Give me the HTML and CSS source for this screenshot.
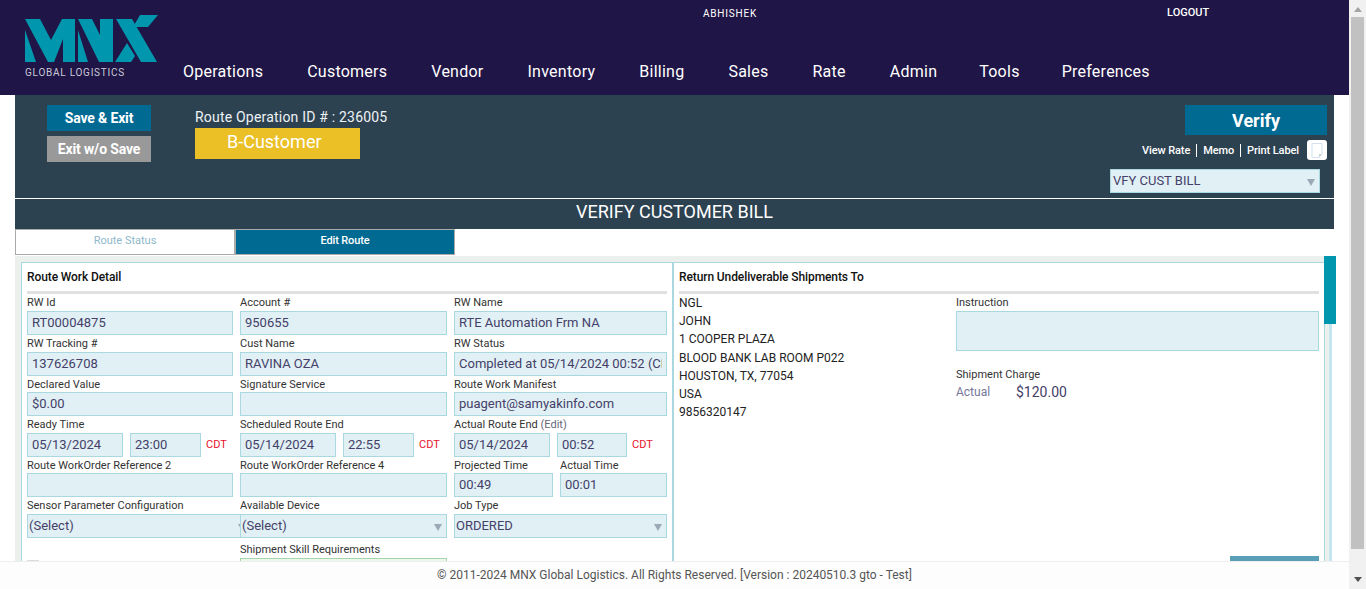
FILE: index.html
```html
<!DOCTYPE html>
<html>
  <head>
    <title>Verify Customer Bill</title>
    <meta name="viewport" content="width=device-width, initial-scale=1.0">
    <link rel="stylesheet" href="styles.css">
  </head>
  <body>
    <div class="page">
      <div class="main">
        <header class="topbar">
          <div class="logo">
            <svg class="logo-mark" width="134" height="47" viewBox="0 0 134 47">
              <polygon fill="#0097ae" points="0,15 11,47 0,47"/>
              <polygon fill="#0097ae" points="0,4 15,4 26,25 37,4 50,4 50,47 38,47 38,24 29,47 23,47"/>
              <polygon fill="#0097ae" points="53,15 63,47 53,47"/>
              <polygon fill="#0097ae" points="53,4 67,4 75,20 75,4 88,4 88,47 74,47"/>
              <polygon fill="#0097ae" points="91,4 107,4 132,47 116,47"/>
              <polygon fill="#0097ae" points="102,28 110,41 106,47 90,47"/>
              <polygon fill="#0097ae" points="115,0 133,0 123,12 108,12"/>
            </svg>
            <div class="logo-text">GLOBAL LOGISTICS</div>
          </div>
          <div class="topbar-right">
            <div class="userbar">
              <span class="username">ABHISHEK</span>
              <a class="logout">LOGOUT</a>
            </div>
            <nav class="nav">
              <a>Operations</a>
              <a>Customers</a>
              <a>Vendor</a>
              <a>Inventory</a>
              <a>Billing</a>
              <a>Sales</a>
              <a>Rate</a>
              <a>Admin</a>
              <a>Tools</a>
              <a>Preferences</a>
            </nav>
          </div>
        </header>

        <section class="route-head">
          <div class="route-actions">
            <div class="actions-left">
              <button class="btn btn-blue">Save &amp; Exit</button>
              <button class="btn btn-grey">Exit w/o Save</button>
            </div>
            <div class="route-id">
              <div class="route-id-text">Route Operation ID # : 236005</div>
              <div class="route-badge">B-Customer</div>
            </div>
            <div class="actions-right">
              <button class="btn-verify">Verify</button>
              <div class="links">
                <a>View Rate</a>
                <a>Memo</a>
                <a>Print Label</a>
                <span class="note-icon">
                  <svg width="12" height="15" viewBox="0 0 12 15">
                    <path d="M1 .5h10v10.500l-3 3.500H1z" fill="#fff" stroke="#d3e2ee"/>
                    <path d="M8 14.500v-3.500h3z" fill="#c9d3da"/>
                  </svg>
                </span>
              </div>
              <div class="status-select">VFY CUST BILL</div>
            </div>
          </div>
          <h1 class="route-title">VERIFY CUSTOMER BILL</h1>
        </section>

        <div class="tabs">
          <a class="tab">Route Status</a>
          <a class="tab tab-active">Edit Route</a>
        </div>

        <div class="work-wrap">
          <div class="work">
            <div class="panel">
              <div class="panel-left">
                <h2 class="panel-title">Route Work Detail</h2>
                <div class="form-grid">
                  <div class="cell">
                    <label>RW Id</label>
                    <div class="field">RT00004875</div>
                  </div>
                  <div class="cell">
                    <label>Account #</label>
                    <div class="field">950655</div>
                  </div>
                  <div class="cell">
                    <label>RW Name</label>
                    <div class="field">RTE Automation Frm NA</div>
                  </div>

                  <div class="cell">
                    <label>RW Tracking #</label>
                    <div class="field">137626708</div>
                  </div>
                  <div class="cell">
                    <label>Cust Name</label>
                    <div class="field">RAVINA OZA</div>
                  </div>
                  <div class="cell">
                    <label>RW Status</label>
                    <div class="field">Completed at 05/14/2024 00:52 (CDT)</div>
                  </div>

                  <div class="cell">
                    <label>Declared Value</label>
                    <div class="field">$0.00</div>
                  </div>
                  <div class="cell">
                    <label>Signature Service</label>
                    <div class="field"></div>
                  </div>
                  <div class="cell">
                    <label>Route Work Manifest</label>
                    <div class="field">puagent@samyakinfo.com</div>
                  </div>

                  <div class="cell">
                    <label>Ready Time</label>
                    <div class="date-row">
                      <div class="field date">05/13/2024</div>
                      <div class="field time">23:00</div>
                      <span class="tz">CDT</span>
                    </div>
                  </div>
                  <div class="cell">
                    <label>Scheduled Route End</label>
                    <div class="date-row">
                      <div class="field date">05/14/2024</div>
                      <div class="field time">22:55</div>
                      <span class="tz">CDT</span>
                    </div>
                  </div>
                  <div class="cell">
                    <label>Actual Route End <span class="edit">(Edit)</span></label>
                    <div class="date-row">
                      <div class="field date">05/14/2024</div>
                      <div class="field time time-short">00:52</div>
                      <span class="tz">CDT</span>
                    </div>
                  </div>

                  <div class="cell">
                    <label>Route WorkOrder Reference 2</label>
                    <div class="field"></div>
                  </div>
                  <div class="cell">
                    <label>Route WorkOrder Reference 4</label>
                    <div class="field"></div>
                  </div>
                  <div class="cell split">
                    <div class="split-projected">
                      <label>Projected Time</label>
                      <div class="field">00:49</div>
                    </div>
                    <div class="split-actual">
                      <label>Actual Time</label>
                      <div class="field">00:01</div>
                    </div>
                  </div>

                  <div class="cell">
                    <label>Sensor Parameter Configuration</label>
                    <div class="field select select-wide">(Select)</div>
                  </div>
                  <div class="cell cell-over">
                    <label>Available Device</label>
                    <div class="field select">(Select)</div>
                  </div>
                  <div class="cell">
                    <label>Job Type</label>
                    <div class="field select">ORDERED</div>
                  </div>

                  <div class="cell cell-last">
                    <span class="check"></span>
                  </div>
                  <div class="cell cell-last">
                    <label>Shipment Skill Requirements</label>
                    <div class="field field-green"></div>
                  </div>
                </div>
              </div>

              <div class="panel-right">
                <h2 class="panel-title">Return Undeliverable Shipments To</h2>
                <div class="return-cols">
                  <div class="address">
                    <div>NGL</div>
                    <div>JOHN</div>
                    <div>1 COOPER PLAZA</div>
                    <div>BLOOD BANK LAB ROOM P022</div>
                    <div>HOUSTON, TX, 77054</div>
                    <div>USA</div>
                    <div>9856320147</div>
                  </div>
                  <div class="return-side">
                    <label>Instruction</label>
                    <div class="field textarea"></div>
                    <label class="charge-label">Shipment Charge</label>
                    <div class="charge-row">
                      <span class="charge-type">Actual</span>
                      <span class="charge-value">$120.00</span>
                    </div>
                    <div class="save-btn"></div>
                  </div>
                </div>
              </div>
            </div>
          </div>
          <div class="track"></div>
          <div class="track-thumb"></div>
        </div>
      </div>
      <footer class="footer">© 2011-2024 MNX Global Logistics. All Rights Reserved. [Version : 20240510.3 gto - Test]</footer>
    </div>

    <div class="scrollbar">
      <span class="arrow-up"></span>
      <div class="scroll-thumb"></div>
      <span class="arrow-down"></span>
    </div>
  </body>
</html>
```

FILE: styles.css
```css
html, body {
  margin: 0;
  height: 100%;
  overflow: hidden;
}
body {
  display: flex;
  background-color: #fff;
  font-family: Roboto, "Liberation Sans", sans-serif;
  color: #333;
}
.page {
  width: 1349px;
  height: 589px;
  display: flex;
  flex-direction: column;
}
.main {
  flex: 1;
  overflow: hidden;
}

/* top bar */
.topbar {
  height: 95px;
  display: flex;
  background-color: #1f1546;
  color: #fff;
}
.logo {
  width: 158px;
  margin-left: 25px;
  flex: none;
  padding-top: 15px;
}
.logo-mark {
  display: block;
}
.logo-text {
  margin-top: 5px;
  font-size: 10px;
  line-height: 12px;
  letter-spacing: .75px;
  color: #c9c9d6;
}
.topbar-right {
  flex: 1;
}
.userbar {
  height: 61px;
  display: flex;
  padding-top: 6px;
  box-sizing: border-box;
  font-size: 10px;
  line-height: 14px;
}
.username {
  margin: 1px 0 0 520px;
  letter-spacing: .8px;
}
.logout {
  margin-left: 410px;
  font-size: 11px;
  font-weight: 500;
}
.nav {
  display: flex;
  gap: 44px;
  font-size: 16px;
  line-height: 22px;
  letter-spacing: .25px;
}
.nav a:nth-child(n+9) {
  margin-left: -2px;
}

/* route header */
.route-head {
  margin-left: 15px;
  width: 1319px;
  background-color: #2d4251;
  color: #fff;
}
.route-actions {
  height: 103px;
  display: flex;
  border-bottom: 1px solid #fff;
}
.actions-left {
  margin-left: 32px;
  padding-top: 10px;
  width: 148px;
  flex: none;
}
.btn {
  display: block;
  width: 104px;
  height: 26px;
  margin-bottom: 5px;
  padding: 0;
  border: none;
  color: #fff;
  font-family: inherit;
  font-size: 14px;
  font-weight: 700;
  letter-spacing: -.15px;
}
.btn-blue {
  background-color: #006a93;
}
.btn-grey {
  background-color: #999;
}
.route-id {
  padding-top: 14px;
  flex: 1;
}
.route-id-text {
  font-size: 14px;
  line-height: 17px;
  letter-spacing: .2px;
  color: #eef3f6;
}
.route-badge {
  width: 133px;
  height: 31px;
  padding-left: 32px;
  margin-top: 2px;
  background-color: #ebbf26;
  font-size: 18px;
  line-height: 28px;
}
.actions-right {
  width: 217px;
  flex: none;
  padding: 10px 7px 0 0;
  display: flex;
  flex-direction: column;
  align-items: flex-end;
}
.btn-verify {
  width: 142px;
  height: 30px;
  padding: 0;
  border: none;
  background-color: #006a93;
  color: #fff;
  font-family: inherit;
  font-size: 18px;
  font-weight: 700;
}
.links {
  display: flex;
  align-items: center;
  height: 20px;
  margin-top: 5px;
  font-size: 11px;
  font-weight: 500;
  letter-spacing: -.1px;
}
.links a {
  padding: 0 6px;
  line-height: 13px;
  border-left: 1px solid #fff;
}
.links a:first-child {
  border-left: none;
}
.note-icon {
  width: 20px;
  height: 20px;
  margin-left: 2px;
  background-color: #fff;
  border-radius: 3px;
  display: flex;
  align-items: center;
  justify-content: center;
}
.status-select {
  position: relative;
  width: 206px;
  height: 22px;
  margin: 9px 7px 0 0;
  padding-left: 2px;
  background-color: #e0f0f4;
  border: 1px solid #aad8e0;
  font-size: 13px;
  line-height: 22px;
  color: #45406a;
}
.status-select::after, .select::after {
  content: "";
  position: absolute;
  right: 4px;
  top: 9px;
  border-left: 4px solid transparent;
  border-right: 4px solid transparent;
  border-top: 7px solid #9aa9b8;
}
.route-title {
  margin: 0;
  height: 30px;
  font-size: 18px;
  font-weight: 400;
  line-height: 26px;
  text-align: center;
}

/* tabs */
.tabs {
  display: flex;
  margin-left: 15px;
  height: 26px;
}
.tab {
  width: 220px;
  box-sizing: border-box;
  border: 1px solid #aaa;
  background-color: #fff;
  text-align: center;
  font-size: 11px;
  line-height: 22px;
  color: #8fb8cc;
}
.tab-active {
  background-color: #006a93;
  color: #fff;
  font-weight: 500;
  letter-spacing: -.15px;
}

/* work area */
.work-wrap {
  position: relative;
  display: flex;
  margin: 1px 0 0 15px;
}
.work {
  width: 1314px;
  box-sizing: border-box;
  padding: 6px 4px 0 6px;
  background-color: #ecf0ed;
}
.track {
  width: 3px;
  background-color: #c5e6f0;
}
.track-thumb {
  position: absolute;
  left: 1309px;
  top: 0;
  width: 12px;
  height: 68px;
  background-color: #0097ae;
}
.panel {
  display: flex;
  background-color: #fff;
  border: 1px solid #aad8e0;
  border-bottom: none;
  height: 400px;
}
.panel-left {
  width: 640px;
  padding: 0 5px;
  border-right: 2px solid #aad8e0;
  flex: none;
}
.panel-right {
  width: 640px;
  padding: 0 5px;
  flex: none;
}
.panel-title {
  margin: 0;
  height: 28px;
  border-bottom: 3px solid #e0e0e0;
  font-size: 12px;
  font-weight: 500;
  line-height: 29px;
  letter-spacing: -.1px;
  color: #111;
}
.form-grid {
  display: grid;
  grid-template-columns: 206px 207px 213px;
  column-gap: 7px;
  padding-top: .4px;
}
.cell {
  min-width: 0;
}
.cell-over {
  position: relative;
}
.cell-last {
  padding-top: 3.4px;
}
label {
  display: block;
  height: 16.6px;
  font-size: 11px;
  line-height: 17px;
  color: #333;
  white-space: nowrap;
}
.edit {
  color: #667;
}
.field {
  position: relative;
  height: 24px;
  box-sizing: border-box;
  padding: 0 4px;
  background-color: #e0f0f4;
  border: 1px solid #aad8e0;
  font-size: 13px;
  line-height: 22px;
  color: #45406a;
  white-space: nowrap;
  overflow: clip;
  overflow-clip-margin: content-box;
}
.date-row {
  display: flex;
  align-items: center;
  gap: 7px;
}
.date {
  width: 96px;
}
.time {
  width: 71px;
}
.time-short {
  width: 70px;
}
.tz {
  margin-left: -2px;
  font-size: 11px;
  color: #e8112d;
}
.split {
  display: flex;
  gap: 7px;
}
.split-projected {
  width: 99px;
}
.split-actual {
  flex: 1;
}
.select {
  padding: 0 1px;
  overflow: hidden;
}
.select-wide {
  width: 214px;
}
.select-wide::after {
  right: -6px;
}
.field-green {
  border-color: #a5d6a7;
  background-color: #eef7ee;
}
.check {
  display: block;
  width: 12px;
  height: 12px;
  margin-top: 18.6px;
  background-color: #dcdcdc;
}

/* return address */
.return-cols {
  display: flex;
}
.address {
  width: 277px;
  flex: none;
  font-size: 12px;
  line-height: 18.2px;
  color: #222;
}
.return-side {
  flex: 1;
  padding-top: .4px;
}
.textarea {
  height: 40px;
}
.charge-label {
  margin-top: 15px;
}
.charge-row {
  display: flex;
  align-items: center;
  height: 18px;
}
.charge-type {
  width: 60px;
  font-size: 12px;
  color: #77779a;
}
.charge-value {
  font-size: 14px;
  color: #45406a;
}
.save-btn {
  width: 89px;
  height: 28px;
  margin: 155px 0 0 auto;
  background-color: #5a9fb8;
}

/* footer */
.footer {
  height: 28px;
  box-sizing: border-box;
  border-top: 1px solid #eee;
  background-color: #fdfdfd;
  text-align: center;
  font-size: 12px;
  line-height: 26px;
  color: #555;
}

/* page scrollbar */
.scrollbar {
  width: 17px;
  height: 589px;
  flex: none;
  background-color: #f1f1f1;
  display: flex;
  flex-direction: column;
  align-items: center;
}
.scroll-thumb {
  width: 13px;
  height: 532px;
  margin-top: 5px;
  background-color: #c1c1c1;
}
.arrow-up {
  margin-top: 7px;
  border-left: 4px solid transparent;
  border-right: 4px solid transparent;
  border-bottom: 5px solid #a3a3a3;
}
.arrow-down {
  margin-top: 28px;
  border-left: 4px solid transparent;
  border-right: 4px solid transparent;
  border-top: 5px solid #505050;
}
```
